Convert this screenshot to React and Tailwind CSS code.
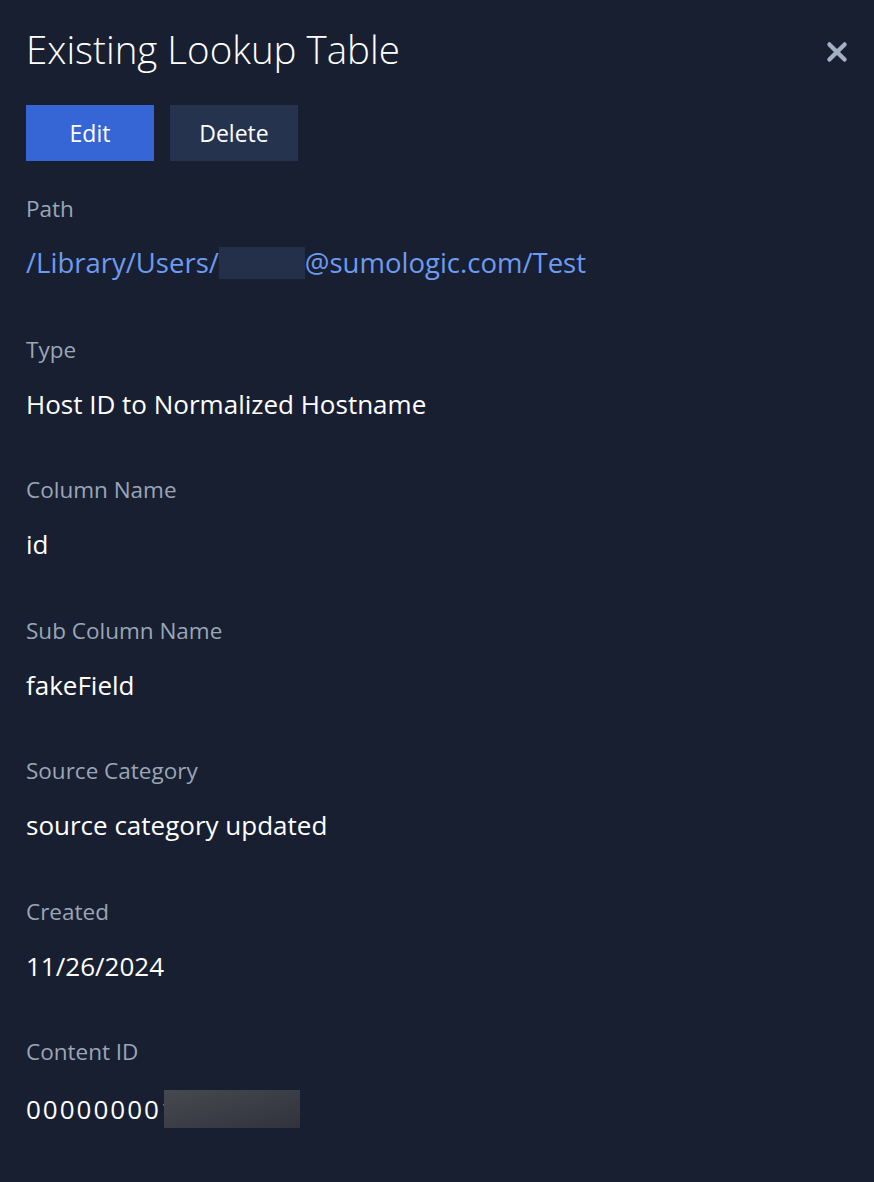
import React from "react";

const fields = [
  { label: "Type", value: "Host ID to Normalized Hostname" },
  { label: "Column Name", value: "id" },
  { label: "Sub Column Name", value: "fakeField" },
  { label: "Source Category", value: "source category updated" },
  { label: "Created", value: "11/26/2024" },
];

function Field({ label, children }) {
  return (
    <div className="flex flex-col h-[140.5px]">
      <div className="text-[22.5px] leading-[28px] text-[#9aa6b6] mt-[-8px]">{label}</div>
      <div className="mt-[24px] text-[26px] leading-[32px] text-white">{children}</div>
    </div>
  );
}

export default function App() {
  return (
    <div
      className="w-[874px] h-[1182px] bg-[#181f31] px-[26px] overflow-hidden"
      style={{ fontFamily: "'Open Sans', 'Noto Sans', sans-serif" }}
    >
      <div className="flex items-center justify-between h-[100px]">
        <h1 className="text-[38.5px] font-light text-white leading-none mt-[-1px]">Existing Lookup Table</h1>
        <button className="mr-[-2px] mt-[4px] text-[#a3b0c2]">
          <svg width="26" height="26" viewBox="0 0 24 24" fill="none" stroke="currentColor" strokeWidth="4" strokeLinecap="round">
            <path d="M5 5l14 14M19 5L5 19" />
          </svg>
        </button>
      </div>
      <div className="flex gap-4 mt-[5px]">
        <button className="w-[128px] h-[56px] bg-[#3665d5] text-white text-[23px]">Edit</button>
        <button className="w-[128px] h-[56px] bg-[#26334f] text-white text-[23px]">Delete</button>
      </div>
      <div className="mt-[42px] flex flex-col">
        <Field label="Path">
          <span className="inline-flex items-center text-[#6d9bf0] text-[27.5px]">
            /Library/Users/
            <span className="inline-block w-[86px] h-[32px] bg-[#243049]" />
            @sumologic.com/Test
          </span>
        </Field>
        {fields.map((f) => (
          <Field key={f.label} label={f.label}>
            {f.value}
          </Field>
        ))}
        <Field label="Content ID">
          <span className="inline-flex items-center">
            <span className="tracking-[2px]">000000001</span>
            <span className="inline-block w-[136px] h-[38px] ml-[-14px] bg-gradient-to-br from-[#474950] to-[#30333d]" />
          </span>
        </Field>
      </div>
    </div>
  );
}
